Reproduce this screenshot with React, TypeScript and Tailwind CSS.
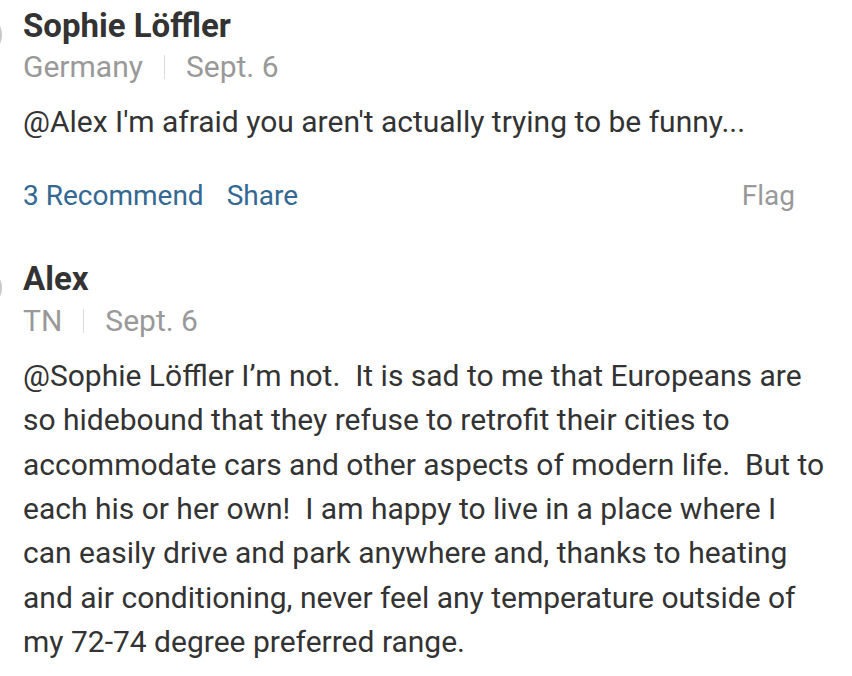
type CommentProps = {
  name: string
  location: string
  date: string
  lines: string[]
  recommends?: number
  first?: boolean
}

function Avatar() {
  return <div className="w-[40px] h-[40px] shrink-0 rounded-full bg-[#c8c8c8] ml-[-38.5px] mt-[15px]" />
}

function Comment({ name, location, date, lines, recommends, first }: CommentProps) {
  return (
    <div className={`flex items-start ${first ? '' : 'mt-[36.6px]'}`}>
      <Avatar />
      <div className="ml-[21.5px] pt-[6px] flex-1">
        <div className="text-[33px] leading-[40px] font-bold text-[#333]">{name}</div>
        <div className={`flex items-center text-[30px] leading-[40px] text-[#999] ${first ? 'mt-[1px]' : 'mt-[2px]'}`}>
          <span>{location}</span>
          <span className="inline-block w-px h-[24px] bg-[#dcdcdc] mx-[21px]" />
          <span>{date}</span>
        </div>
        <div className={`text-[30px] leading-[44.33px] text-[#333] ${first ? 'mt-[13px]' : 'mt-[13px]'}`}>
          {lines.map((line, i) => (
            <div key={i} className="whitespace-pre">{line}</div>
          ))}
        </div>
        {recommends !== undefined && (
          <div className="flex items-center justify-between mt-[32px] pr-[57px] text-[28px] leading-[40px]">
            <div className="flex items-center gap-[23px] text-[#326891]">
              <span>{recommends} Recommend</span>
              <span>Share</span>
            </div>
            <span className="text-[#999]">Flag</span>
          </div>
        )}
      </div>
    </div>
  )
}

export default function App() {
  return (
    <div className="w-[852px] h-[676px] overflow-hidden bg-white font-['Roboto','Liberation_Sans',sans-serif]">
      <Comment
        first
        name="Sophie Löffler"
        location="Germany"
        date="Sept. 6"
        lines={["@Alex I'm afraid you aren't actually trying to be funny..."]}
        recommends={3}
      />
      <Comment
        name="Alex"
        location="TN"
        date="Sept. 6"
        lines={[
          '@Sophie Löffler I’m not.  It is sad to me that Europeans are',
          'so hidebound that they refuse to retrofit their cities to',
          'accommodate cars and other aspects of modern life.  But to',
          'each his or her own!  I am happy to live in a place where I',
          'can easily drive and park anywhere and, thanks to heating',
          'and air conditioning, never feel any temperature outside of',
          'my 72-74 degree preferred range.',
        ]}
      />
    </div>
  )
}
